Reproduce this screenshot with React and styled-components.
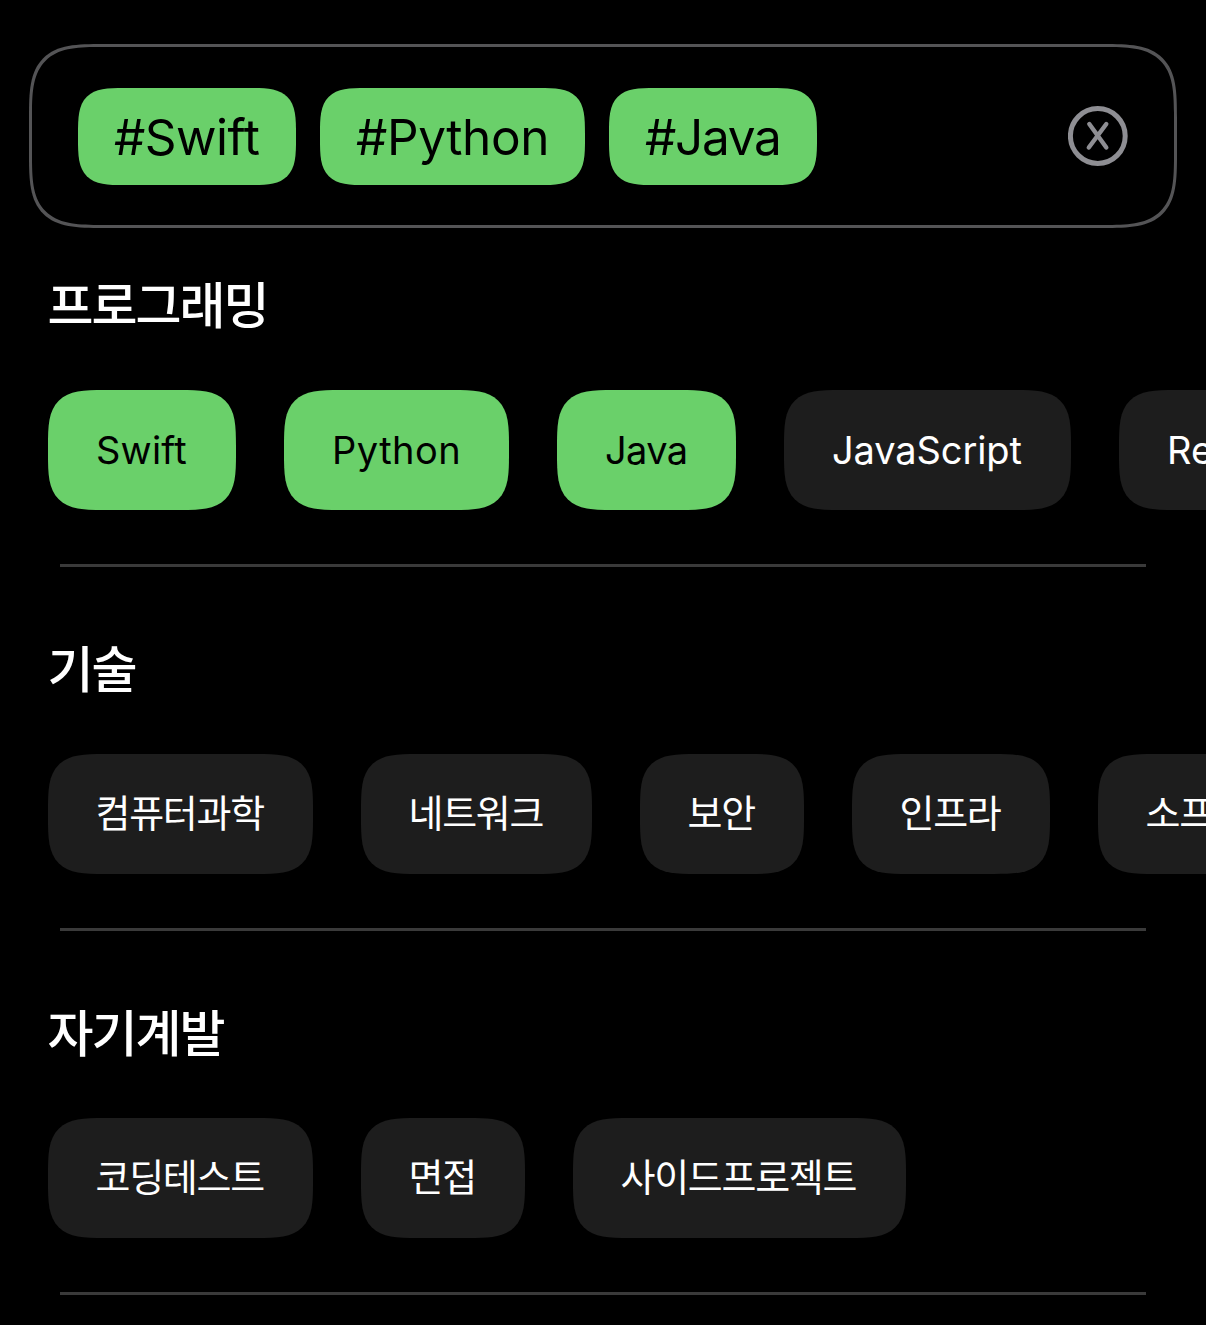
import React from "react";
import styled, { createGlobalStyle } from "styled-components";

const GlobalStyle = createGlobalStyle`
  * { box-sizing: border-box; }
  html, body { margin: 0; background: #000; }
  body { overflow: hidden; }
`;

const Screen = styled.main`
  width: 1206px;
  height: 1325px;
  padding-top: 44px;
  overflow: hidden;
  background: #000;
  color: #fff;
  font-family: Inter, "Noto Sans CJK KR", sans-serif;
`;

const SearchField = styled.div`
  display: flex;
  align-items: center;
  justify-content: space-between;
  height: 184px;
  margin: 0 29px;
  padding: 0 46px;
  border: 3px solid #545456;
  border-radius: 52px;
  @supports (corner-shape: superellipse(1.3)) {
    border-radius: 74px;
    corner-shape: superellipse(1.7);
  }
`;

const Tokens = styled.div`
  display: flex;
  gap: 24px;
`;

const Pill = styled.span`
  display: flex;
  flex: none;
  align-items: center;
  width: ${(p) => p.$width}px;
  letter-spacing: ${(p) => p.$tracking}px;
  white-space: nowrap;
`;

const Token = styled(Pill)`
  height: 97px;
  padding: 1px 0 0 ${(p) => p.$inset}px;
  border-radius: 34px;
  background: #6ad06a;
  color: #000;
  font-size: 49.5px;
  font-weight: 380;
  @supports (corner-shape: superellipse(1.3)) {
    border-radius: 46px;
    corner-shape: superellipse(1.7);
  }
`;

const ClearButton = styled.button`
  display: flex;
  padding: 0;
  border: 0;
  background: none;
  color: #8e8e93;
`;

const Section = styled.section`
  height: 364px;
`;

const Heading = styled.h2`
  display: flex;
  align-items: center;
  height: 162px;
  margin: 0;
  padding: 0 0 14px 47.5px;
  font-size: 50px;
  font-weight: 500;
  letter-spacing: -2px;
`;

const ChipRow = styled.div`
  display: flex;
  gap: 48px;
  padding-left: 48px;
`;

const Chip = styled(Pill)`
  height: 120px;
  padding: 0 0 ${(p) => (p.$hangul ? 7 : 0)}px ${(p) => p.$inset}px;
  border-radius: 42px;
  background: ${(p) => (p.$selected ? "#6ad06a" : "#1d1d1d")};
  color: ${(p) => (p.$selected ? "#000" : "#fff")};
  font-size: 38px;
  font-weight: 390;
  @supports (corner-shape: superellipse(1.3)) {
    border-radius: 56px;
    corner-shape: superellipse(1.7);
  }
`;

const Divider = styled.hr`
  height: 3px;
  margin: 54px 60px 0;
  border: 0;
  background: #3a3a3a;
`;

const tokens = [
  { label: "#Swift", width: 218, inset: 36, tracking: -0.5 },
  { label: "#Python", width: 265, inset: 36, tracking: -0.4 },
  { label: "#Java", width: 208, inset: 36, tracking: -1.3 },
];

const sections = [
  {
    title: "프로그래밍",
    chips: [
      { label: "Swift", width: 188, inset: 48, tracking: 0.2, selected: true },
      { label: "Python", width: 225, inset: 48, tracking: 0.5, selected: true },
      { label: "Java", width: 179, inset: 48, tracking: -0.6, selected: true },
      { label: "JavaScript", width: 287, inset: 48, tracking: -0.1 },
      { label: "React", width: 202, inset: 48, tracking: 0 },
    ],
  },
  {
    title: "기술",
    hangul: true,
    chips: [
      { label: "컴퓨터과학", width: 265 },
      { label: "네트워크", width: 231 },
      { label: "보안", width: 164 },
      { label: "인프라", width: 198 },
      { label: "소프트웨어", width: 265 },
    ],
  },
  {
    title: "자기계발",
    hangul: true,
    chips: [
      { label: "코딩테스트", width: 265 },
      { label: "면접", width: 164 },
      { label: "사이드프로젝트", width: 333 },
    ],
  },
];

function ClearIcon() {
  return (
    <svg width="60" height="60" viewBox="0 0 60 60" fill="none" stroke="currentColor" strokeLinecap="round">
      <circle cx="29.8" cy="30" r="27.4" strokeWidth="5" />
      <path d="M21.3 18 L38.3 41.5 M38.3 18 L20.8 41.5" strokeWidth="4.4" />
    </svg>
  );
}

export default function App() {
  return (
    <>
      <GlobalStyle />
      <Screen>
        <SearchField>
          <Tokens>
            {tokens.map((t) => (
              <Token key={t.label} $width={t.width} $inset={t.inset} $tracking={t.tracking}>{t.label}</Token>
            ))}
          </Tokens>
          <ClearButton aria-label="지우기"><ClearIcon /></ClearButton>
        </SearchField>
        {sections.map((s) => (
          <Section key={s.title}>
            <Heading>{s.title}</Heading>
            <ChipRow>
              {s.chips.map((c) => (
                <Chip
                  key={c.label}
                  $width={c.width}
                  $inset={c.inset ?? 47.5}
                  $tracking={c.tracking ?? -1.3}
                  $hangul={s.hangul}
                  $selected={c.selected}
                >
                  {c.label}
                </Chip>
              ))}
            </ChipRow>
            <Divider />
          </Section>
        ))}
      </Screen>
    </>
  );
}
